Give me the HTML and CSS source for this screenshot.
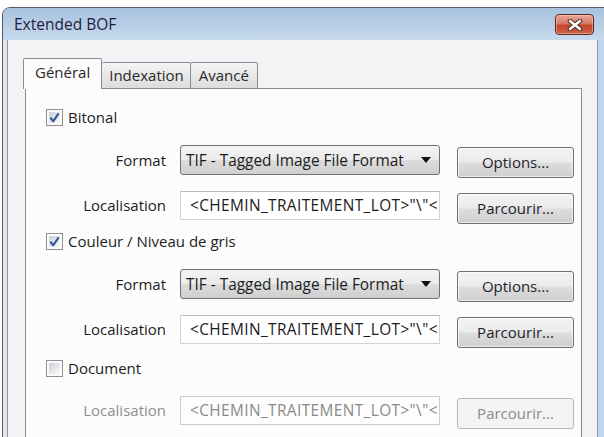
FILE: index.html
```html
<!DOCTYPE html>
<html lang="fr">
<head>
<meta charset="utf-8">
<title>Extended BOF</title>
<link rel="stylesheet" href="styles.css">
</head>
<body>
<div class="window">
  <div class="titlebar">
    <span class="title">Extended BOF</span>
    <span class="close" aria-label="Fermer">
      <svg width="16" height="12" viewBox="0 0 16 12">
        <path d="M3 2 L13 10 M13 2 L3 10" stroke="#4a2a26" stroke-width="4.6" stroke-linecap="round" fill="none"/>
        <path d="M3 2 L13 10 M13 2 L3 10" stroke="#ffffff" stroke-width="2.6" stroke-linecap="round" fill="none"/>
      </svg>
    </span>
  </div>
  <div class="client">
    <div class="tabs">
      <div class="tab selected">Général</div>
      <div class="tab">Indexation</div>
      <div class="tab">Avancé</div>
    </div>
    <div class="panel">
      <div class="check-row">
        <span class="checkbox"><svg width="11" height="11" viewBox="0 0 10 10"><path d="M1.2 5.2 L3.9 8.4 L8.8 1.2" stroke="#3a5a9c" stroke-width="2" fill="none" stroke-linejoin="round"/></svg></span>
        <span>Bitonal</span>
      </div>
      <div class="field-row format-row">
        <span class="label">Format</span>
        <div class="combo"><span class="combo-text">TIF - Tagged Image File Format</span><span class="arrow"></span></div>
        <div class="button">Options...</div>
      </div>
      <div class="field-row loc-row">
        <span class="label loc-label">Localisation</span>
        <div class="textbox">&lt;CHEMIN_TRAITEMENT_LOT&gt;"\"&lt;</div>
        <div class="button">Parcourir...</div>
      </div>

      <div class="check-row second">
        <span class="checkbox"><svg width="11" height="11" viewBox="0 0 10 10"><path d="M1.2 5.2 L3.9 8.4 L8.8 1.2" stroke="#3a5a9c" stroke-width="2" fill="none" stroke-linejoin="round"/></svg></span>
        <span>Couleur / Niveau de gris</span>
      </div>
      <div class="field-row format-row">
        <span class="label">Format</span>
        <div class="combo"><span class="combo-text">TIF - Tagged Image File Format</span><span class="arrow"></span></div>
        <div class="button">Options...</div>
      </div>
      <div class="field-row loc-row">
        <span class="label loc-label">Localisation</span>
        <div class="textbox">&lt;CHEMIN_TRAITEMENT_LOT&gt;"\"&lt;</div>
        <div class="button">Parcourir...</div>
      </div>

      <div class="check-row third">
        <span class="checkbox"></span>
        <span>Document</span>
      </div>
      <div class="field-row loc-row after-check disabled">
        <span class="label loc-label">Localisation</span>
        <div class="textbox">&lt;CHEMIN_TRAITEMENT_LOT&gt;"\"&lt;</div>
        <div class="button">Parcourir...</div>
      </div>
    </div>
  </div>
</div>
</body>
</html>
```

FILE: styles.css
```css
* { box-sizing: border-box; }

html, body {
  margin: 0;
  height: 100%;
  overflow: hidden;
  background: #ffffff;
}

body {
  font-family: "Open Sans", "Noto Sans", sans-serif;
  font-size: 15px;
  color: #1c1c1c;
}

.window {
  margin: 7px 0 0 2px;
  width: 612px;
  height: 460px;
  border: 1px solid #505c6a;
  border-radius: 8px 8px 0 0;
  background: linear-gradient(to right, #e4e8ee 0, #e4e8ee 12px, #c0d5ee 12px);
  overflow: hidden;
}

.titlebar {
  height: 32px;
  display: flex;
  align-items: flex-start;
  padding-left: 11px;
  background: linear-gradient(#a8c2df, #c6d9ee);
}

.title {
  line-height: 32px;
  font-size: 15.5px;
  color: #1f1c3c;
}

.close {
  margin-left: auto;
  margin-right: 19px;
  margin-top: 6px;
  width: 39px;
  height: 21px;
  border: 1px solid #5a2a22;
  border-radius: 4px;
  background: linear-gradient(#e9a99b 0%, #d67a66 45%, #c4452c 55%, #d0634a 100%);
  box-shadow: inset 0 0 0 1px rgba(255, 220, 210, 0.45);
  display: flex;
  align-items: center;
  justify-content: center;
}

.client {
  margin-left: 4px;
  width: 591px;
  height: 420px;
  border-left: 1px solid #8e98a5;
  border-right: 1px solid #8e98a5;
  background: #f3f2f5;
  padding: 18px 0 0 17px;
}

.tabs {
  display: flex;
  align-items: flex-end;
  height: 31px;
  margin-left: -2px;
  margin-bottom: -1px;
  position: relative;
  z-index: 1;
}

.tab {
  height: 26px;
  line-height: 24px;
  margin-bottom: 1px;
  padding: 0 6px 0 7px;
  border: 1px solid #898c95;
  border-left: none;
  border-bottom: none;
  border-radius: 2px 2px 0 0;
  background: linear-gradient(#f4f4f4, #dcdcdc);
  color: #2a2a2a;
}

.tab.selected {
  height: 31px;
  line-height: 27px;
  margin-bottom: 0;
  padding: 0 11px;
  border-left: 1px solid #898c95;
  background: #fcfcfd;
}

.tab:last-child {
  padding: 0 8px 0 8px;
}

.panel {
  width: 557px;
  height: 400px;
  border: 1px solid #898c95;
  background: #fcfcfd;
  padding: 19px 0 0 20px;
}

.check-row {
  display: flex;
  align-items: center;
  height: 18px;
  gap: 5px;
}

.check-row.second {
  margin-top: 8px;
}

.check-row.third {
  margin-top: 11px;
}

.checkbox {
  width: 17px;
  height: 17px;
  border: 1px solid #8f8f8f;
  padding: 2px;
  display: flex;
  align-items: center;
  justify-content: center;
  background:
    linear-gradient(135deg, #c9ced6 0%, #e6e8eb 55%, #f8f8f8 100%) content-box,
    #fbfbfb;
}

.checkbox svg {
  display: block;
}

.field-row {
  display: flex;
  align-items: flex-start;
}

.format-row {
  margin-top: 19px;
}

.loc-row {
  margin-top: 13px;
}

.loc-row.after-check {
  margin-top: 19px;
}

.label {
  width: 134px;
  padding-right: 14px;
  text-align: right;
  line-height: 30px;
  color: #1c1c1c;
}

.loc-label {
  line-height: 29px;
}

.combo {
  width: 260px;
  height: 30px;
  margin-right: 17px;
  border: 1px solid #707070;
  border-radius: 3px;
  background: linear-gradient(#f3f3f3 0%, #ebebeb 48%, #dcdcdc 52%, #cfcfcf 100%);
  display: flex;
  align-items: center;
  padding: 0 8px 0 5px;
  font-size: 15.4px;
  white-space: nowrap;
}

.combo-text {
  flex: 1;
}

.arrow {
  width: 0;
  height: 0;
  border-left: 5px solid transparent;
  border-right: 5px solid transparent;
  border-top: 6px solid #111111;
}

.textbox {
  width: 260px;
  height: 29px;
  margin-right: 17px;
  border: 1px solid #cfd2d6;
  border-top-color: #b5b8bd;
  background: #ffffff;
  padding: 0 0 0 9px;
  line-height: 27px;
  font-size: 15.4px;
  letter-spacing: 0.4px;
  white-space: nowrap;
  overflow: hidden;
}

.button {
  width: 117px;
  height: 31px;
  margin-top: 2px;
  border: 1px solid #707070;
  border-radius: 3px;
  background: linear-gradient(#f3f3f3 0%, #ebebeb 48%, #dddddd 52%, #cfcfcf 100%);
  box-shadow: inset 0 0 0 1px rgba(255, 255, 255, 0.6);
  text-align: center;
  line-height: 29px;
  color: #1e1e2a;
}

.disabled .label {
  color: #8e8e8e;
}

.disabled .textbox {
  color: #8a8a8a;
  border-color: #c9cbcf;
  background: #fdfdfd;
}

.disabled .button {
  color: #8a8a8a;
  border-color: #b2b5b9;
  background: #f4f4f4;
  box-shadow: none;
}
```
